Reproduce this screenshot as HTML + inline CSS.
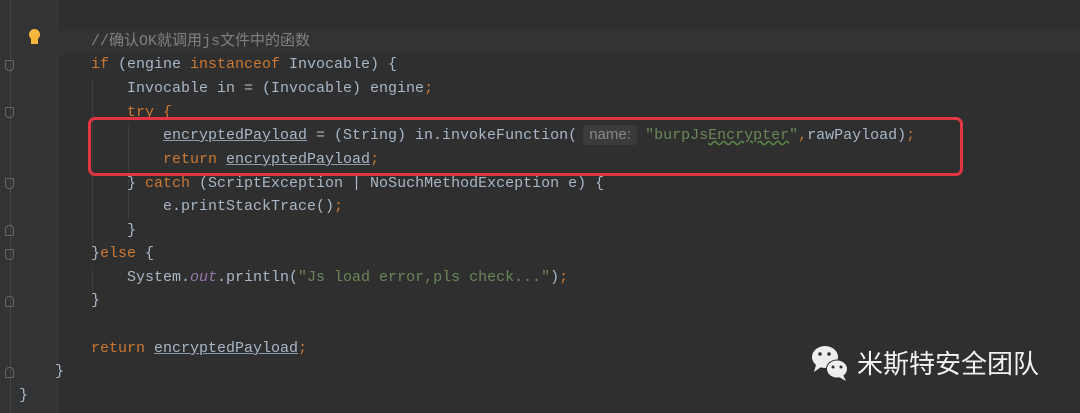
<html><head><style>
body{margin:0;width:1080px;height:413px;background:#2f2f2f;overflow:hidden;position:relative;font-family:"Liberation Mono","Noto Sans CJK SC",monospace;font-size:15px;color:#a9b7c6}
.l{position:absolute;height:24px;line-height:24px;white-space:pre}
.k{color:#cc7832}.s{color:#6a8759}.c{color:#808080}.u{text-decoration:underline;text-decoration-color:#8a9aa8}
.o{color:#9876aa;font-style:italic}
.g{position:absolute;width:1px;background:#3c3c3c}
.f{position:absolute;left:5px;width:9px;height:11px;border:1px solid #666;border-radius:1px 1px 4px 4px;box-sizing:border-box}
.f2{border-radius:4px 4px 1px 1px}
</style></head><body>
<div style="position:absolute;left:0;top:0;width:57px;height:413px;background:#313335"></div>
<div class="g" style="left:10px;top:0;height:413px;background:#444"></div>
<div class="g" style="left:57px;top:0;height:413px;background:#3a3a3a"></div>
<div style="position:absolute;left:57px;top:30px;width:1023px;height:24px;background:#333333"></div>
<div class="g" style="left:92px;top:78px;height:170px"></div>
<div class="g" style="left:92px;top:266px;height:25px"></div>
<div class="g" style="left:128px;top:125px;height:95px"></div>
<div class="f" style="top:60px"></div><div class="f" style="top:107px"></div><div class="f" style="top:178px"></div>
<div class="f f2" style="top:225px"></div><div class="f" style="top:249px"></div><div class="f f2" style="top:296px"></div><div class="f f2" style="top:367px"></div>
<div style="position:absolute;left:29px;top:29px;width:11px;height:11px;border-radius:50%;background:#f4b73b"></div>
<div style="position:absolute;left:31px;top:39px;width:7px;height:5px;background:#f4b73b"></div>
<div class="l c" style="left:91px;top:30px">//确认OK就调用js文件中的函数</div>
<div class="l" style="left:91px;top:53px"><span class="k">if</span> (engine <span class="k">instanceof</span> Invocable) {</div>
<div class="l" style="left:127px;top:77px">Invocable in = (Invocable) engine<span class="k">;</span></div>
<div class="l k" style="left:127px;top:101px">try {</div>
<div class="l" style="left:163px;top:124px"><span class="u">encryptedPayload</span> = (String) in.invokeFunction(<span style="display:inline-block;background:#3b3b3b;color:#888;font-family:'Liberation Sans',sans-serif;font-size:15px;line-height:20px;width:54px;margin:0 8px 0 6px;text-align:center;border-radius:3px">name:</span><span class="s">"burpJs<span style="text-decoration:underline wavy #5a8a4a">Encrypter</span>"</span><span class="k">,</span>rawPayload)<span class="k">;</span></div>
<div class="l" style="left:163px;top:148px"><span class="k">return</span> <span class="u">encryptedPayload</span><span class="k">;</span></div>
<div class="l" style="left:127px;top:172px">} <span class="k">catch</span> (ScriptException | NoSuchMethodException e) {</div>
<div class="l" style="left:163px;top:195px">e.printStackTrace()<span class="k">;</span></div>
<div class="l" style="left:127px;top:219px">}</div>
<div class="l" style="left:91px;top:242px">}<span class="k">else</span> {</div>
<div class="l" style="left:127px;top:266px">System.<span class="o">out</span>.println(<span class="s">"Js load error,pls check..."</span>)<span class="k">;</span></div>
<div class="l" style="left:91px;top:289px">}</div>
<div class="l" style="left:91px;top:337px"><span class="k">return</span> <span class="u">encryptedPayload</span><span class="k">;</span></div>
<div class="l" style="left:55px;top:360px">}</div>
<div class="l" style="left:19px;top:384px">}</div>
<div style="position:absolute;left:88px;top:117px;width:875px;height:59px;border:3px solid #e33544;border-radius:7px;box-sizing:border-box"></div>
<svg style="position:absolute;left:810px;top:343px" width="42" height="40" viewBox="0 0 42 40">
<ellipse cx="15" cy="14" rx="13" ry="11" fill="#eee"/><path d="M6 22 L4 29 L11 24Z" fill="#eee"/>
<ellipse cx="27" cy="26" rx="11" ry="9.5" fill="#2f2f2f"/><ellipse cx="27" cy="26" rx="10" ry="8.5" fill="#eee"/><path d="M33 32 L36 38 L29 34Z" fill="#eee"/>
<circle cx="10" cy="11" r="1.8" fill="#2f2f2f"/><circle cx="19" cy="11" r="1.8" fill="#2f2f2f"/>
<circle cx="23" cy="24" r="1.5" fill="#2f2f2f"/><circle cx="31" cy="24" r="1.5" fill="#2f2f2f"/></svg>
<div style="position:absolute;left:857px;top:345px;font-family:'Noto Sans CJK SC',sans-serif;font-size:26px;line-height:36px;color:#f2f2f2">米斯特安全团队</div>
</body></html>
